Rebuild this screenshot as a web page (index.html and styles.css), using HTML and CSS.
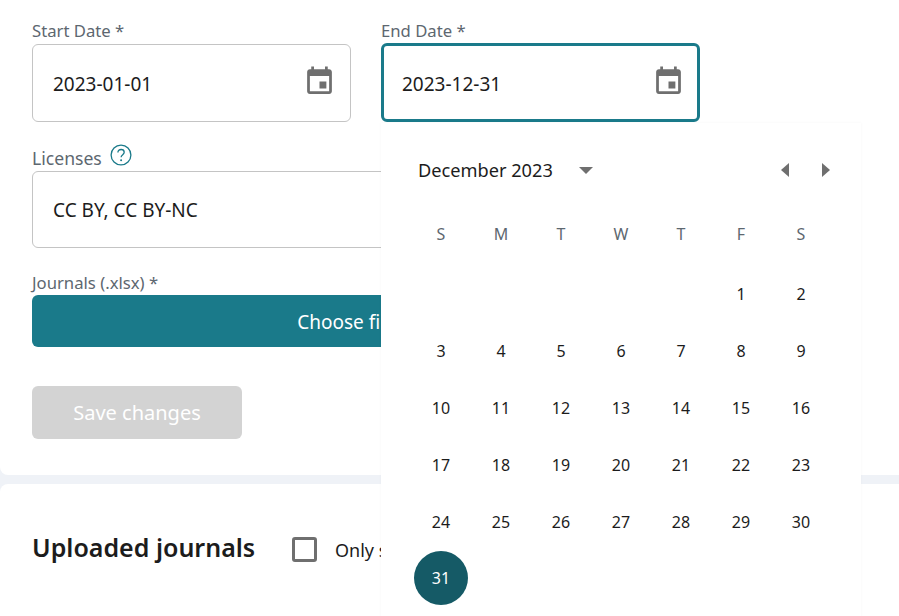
FILE: index.html
```html
<!DOCTYPE html>
<html lang="en">
<head>
<meta charset="utf-8">
<title>Journals</title>
<link rel="stylesheet" href="styles.css">
</head>
<body>
<main class="page">
  <section class="card form-card">
    <div class="date-row">
      <div class="field">
        <label class="label">Start Date *</label>
        <div class="input date-input">
          <span>2023-01-01</span>
          <svg class="cal-icon" viewBox="0 0 24 24"><path d="M17 12h-5v5h5v-5zM16 1v2H8V1H6v2H5c-1.11 0-1.99.9-1.99 2L3 19c0 1.1.89 2 2 2h14c1.1 0 2-.9 2-2V5c0-1.1-.9-2-2-2h-1V1h-2zm3 18H5V8h14v11z"/></svg>
        </div>
      </div>
      <div class="field end-field">
        <label class="label">End Date *</label>
        <div class="input date-input focused">
          <span>2023-12-31</span>
          <svg class="cal-icon" viewBox="0 0 24 24"><path d="M17 12h-5v5h5v-5zM16 1v2H8V1H6v2H5c-1.11 0-1.99.9-1.99 2L3 19c0 1.1.89 2 2 2h14c1.1 0 2-.9 2-2V5c0-1.1-.9-2-2-2h-1V1h-2zm3 18H5V8h14v11z"/></svg>
        </div>
        <div class="calendar">
          <div class="cal-head">
            <span class="cal-month">December 2023</span>
            <svg class="caret" viewBox="0 0 14 7"><path d="M0 0h14L7 7z"/></svg>
            <span class="cal-nav">
              <svg class="arrow" viewBox="0 0 8 14"><path d="M8 0v14L0 7z"/></svg>
              <svg class="arrow" viewBox="0 0 8 14"><path d="M0 0v14l8-7z"/></svg>
            </span>
          </div>
          <div class="cal-week">
            <span>S</span><span>M</span><span>T</span><span>W</span><span>T</span><span>F</span><span>S</span>
          </div>
          <div class="cal-days">
            <span></span><span></span><span></span><span></span><span></span><span>1</span><span>2</span>
            <span>3</span><span>4</span><span>5</span><span>6</span><span>7</span><span>8</span><span>9</span>
            <span>10</span><span>11</span><span>12</span><span>13</span><span>14</span><span>15</span><span>16</span>
            <span>17</span><span>18</span><span>19</span><span>20</span><span>21</span><span>22</span><span>23</span>
            <span>24</span><span>25</span><span>26</span><span>27</span><span>28</span><span>29</span><span>30</span>
            <span class="selected"><b>31</b></span>
          </div>
        </div>
      </div>
    </div>
    <div class="field licenses">
      <label class="label label-help">Licenses
        <svg class="help" viewBox="0 0 22 22"><circle cx="11" cy="11" r="9.9"/><path d="M7.9 8.6c0-1.9 1.4-3.1 3.2-3.1s3.1 1.1 3.1 2.8c0 2.3-3.1 2.4-3.1 5"/><circle class="dot" cx="11.1" cy="16.3" r="1"/></svg>
      </label>
      <div class="input"><span>CC BY, CC BY-NC</span></div>
    </div>
    <div class="field journals">
      <label class="label">Journals (.xlsx) *</label>
      <div class="file-btn">Choose file</div>
    </div>
    <button class="save" type="button">Save changes</button>
  </section>
  <section class="card list-card">
    <h2 class="list-title">Uploaded journals</h2>
    <span class="checkbox"></span>
    <span class="only">Only show</span>
  </section>
</main>
</body>
</html>
```
FILE: styles.css
```css
* { box-sizing: border-box; }
html, body { margin: 0; height: 100%; overflow: hidden; }
body { background: #eff2f7; font-family: "Noto Sans", "Open Sans", sans-serif; color: #1c1c1c; }
.page { display: flex; flex-direction: column; gap: 9px; height: 100vh; }
.card { background: #fff; }
.form-card { height: 475px; flex: none; padding: 18px 199px 0 32px; border-radius: 0 0 0 8px; }
.date-row { display: grid; grid-template-columns: 319px 319px; column-gap: 30px; }
.field { display: flex; flex-direction: column; }
.end-field { position: relative; }
.label { font-size: 16.7px; line-height: 25px; height: 25px; color: #5d6770; }
.date-row .label { height: 26px; }
.input { height: 78px; border: 1px solid #c4c4c4; border-radius: 6px; display: flex; align-items: center; justify-content: space-between; padding: 0 14px 0 20px; font-size: 19px; color: #1c1c1c; background: #fff; }
.date-input > span { margin-top: 2px; }
.focused { border: 3px solid #1a7a8a; padding: 0 12px 0 18px; margin-top: -1px; height: 79px; }
.cal-icon { width: 33px; height: 33px; fill: #6f6f6f; margin-top: -3px; }
.licenses { margin-top: 24px; }
.licenses .input { height: 77px; width: 668px; }
.label-help { display: flex; gap: 8px; align-items: flex-start; font-size: 17.6px; }
.help { width: 22px; height: 22px; margin-top: -2px; fill: none; stroke: #1a7a8a; stroke-width: 1.3; }
.help .dot { fill: #1a7a8a; stroke: none; }
.journals { margin-top: 23px; }
.journals .label { height: 24px; line-height: 24px; }
.file-btn { height: 52px; width: 668px; background: #1a7a8a; color: #fff; border-radius: 6px; font-size: 19px; display: flex; align-items: center; justify-content: center; padding: 2px 39px 0 0; }
.save { display: block; margin-top: 39px; width: 210px; height: 53px; background: #d3d3d3; color: #fff; border: 0; border-radius: 6px; font: inherit; font-size: 20px; padding: 0; }
.list-card { flex: 1; border-radius: 8px 0 0 0; padding: 0 32px; display: flex; align-items: center; }
.list-title { margin: 0; font-size: 25px; font-weight: 600; color: #1c1c1c; width: 260px; flex: none; position: relative; top: -3px; }
.checkbox { width: 25px; height: 25px; border: 3px solid #6f6f6f; border-radius: 3px; flex: none; margin-top: -2px; }
.only { margin-left: 18px; font-size: 18px; white-space: nowrap; color: #1c1c1c; }
.calendar { position: absolute; left: 0; top: 105px; width: 480px; height: 520px; background: #fff; box-shadow: 0 0 3px rgba(0, 0, 0, .04); padding: 0 30px; z-index: 2; }
.cal-head { display: flex; align-items: center; height: 40px; margin-top: 27px; padding-left: 7px; }
.cal-month { font-size: 18.2px; color: #1c1c1c; width: 161px; white-space: nowrap; }
.caret { width: 14px; height: 7px; fill: #6f6f6f; }
.cal-nav { margin-left: auto; margin-right: 1px; display: flex; gap: 33px; }
.arrow { width: 8px; height: 14px; fill: #6f6f6f; display: block; }
.cal-week { display: grid; grid-template-columns: repeat(7, 60px); margin-top: 24px; height: 40px; align-items: center; justify-items: center; font-size: 16px; color: #5d6770; }
.cal-days { display: grid; grid-template-columns: repeat(7, 60px); grid-auto-rows: 57px; margin-top: 11px; justify-items: center; align-items: center; font-size: 16px; color: #1c1c1c; }
.selected b { display: flex; width: 54px; height: 54px; margin-top: -2px; border-radius: 50%; background: #155a66; color: #fff; font-weight: 400; align-items: center; justify-content: center; }
```
